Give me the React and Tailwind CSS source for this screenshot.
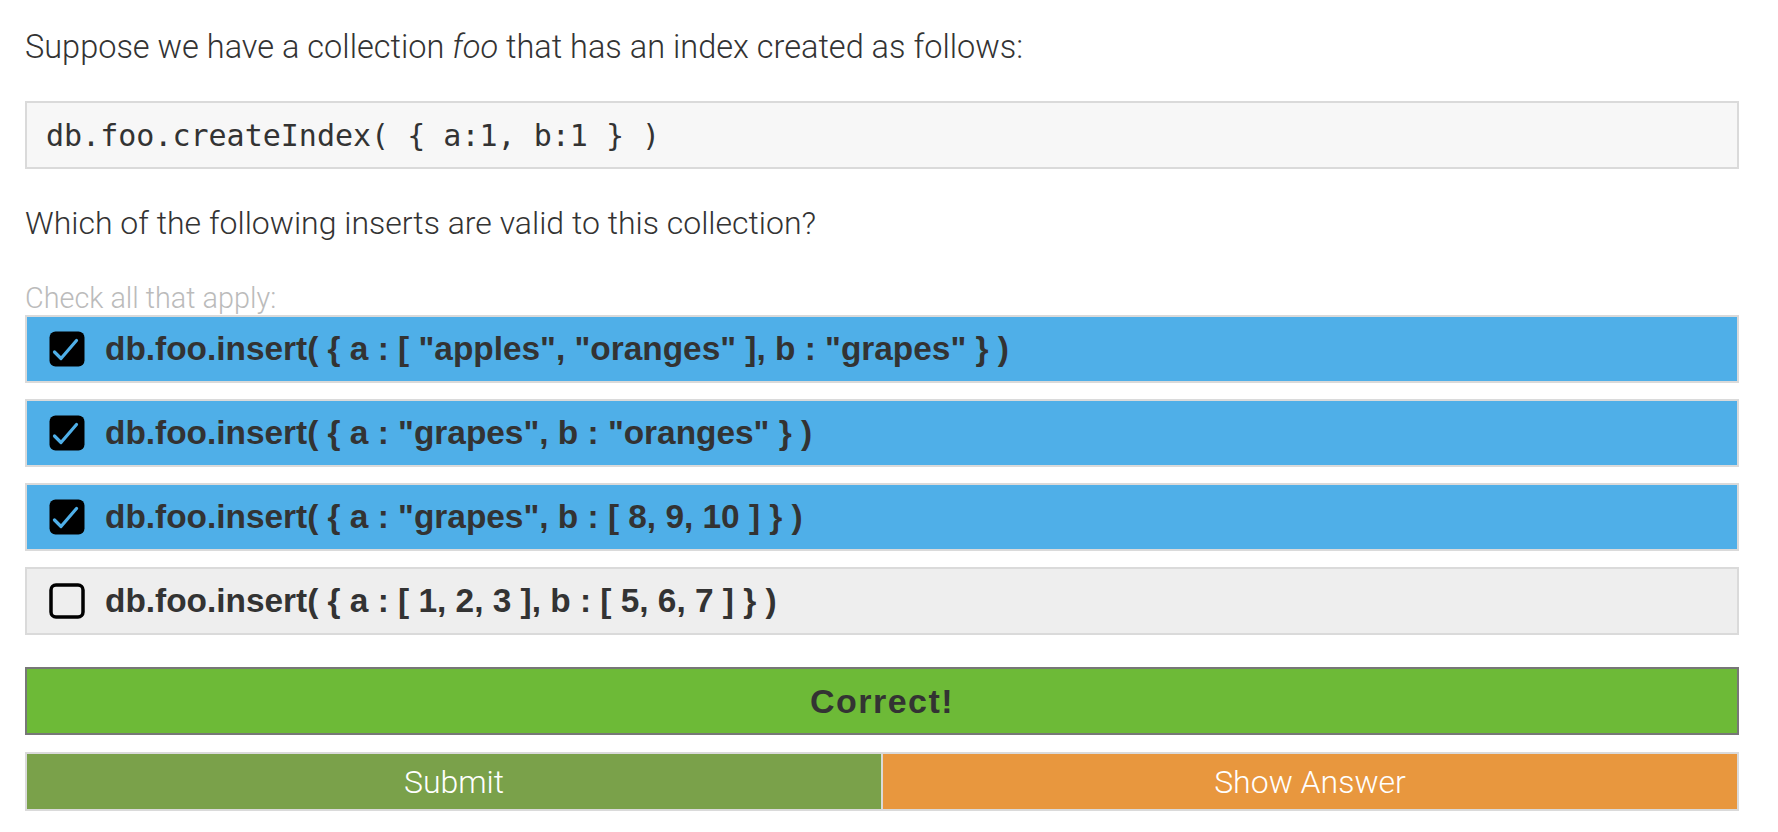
import React from "react";

const rows = [
  { text: 'db.foo.insert( { a : [ "apples", "oranges" ], b : "grapes" } )', checked: true },
  { text: 'db.foo.insert( { a : "grapes", b : "oranges" } )', checked: true },
  { text: 'db.foo.insert( { a : "grapes", b : [ 8, 9, 10 ] } )', checked: true },
  { text: 'db.foo.insert( { a : [ 1, 2, 3 ], b : [ 5, 6, 7 ] } )', checked: false },
];

function CheckBox({ checked }) {
  if (checked) {
    return (
      <svg width="36" height="36" viewBox="0 0 36 36" className="shrink-0">
        <rect x="0.5" y="0.5" width="35" height="35" rx="6" fill="#000" />
        <path d="M5.5 21 L12 27.5 L27.5 9.5" stroke="#4fafe8" strokeWidth="3.2" fill="none" strokeLinecap="round" strokeLinejoin="round" />
      </svg>
    );
  }
  return (
    <svg width="36" height="36" viewBox="0 0 36 36" className="shrink-0">
      <rect x="2" y="2" width="32" height="32" rx="5" fill="none" stroke="#000" strokeWidth="3.5" />
    </svg>
  );
}

export default function App() {
  return (
    <div className="bg-white w-[1778px] h-[832px] overflow-hidden font-['Roboto',sans-serif] font-light text-[#333]">
      <div className="ml-[25px] w-[1714px] pt-[27px]">
        <p className="text-[32.5px] leading-[40px]">
          Suppose we have a collection <em>foo</em> that has an index created as follows:
        </p>
        <div className="mt-[34px] h-[68px] border-2 border-[#dadada] bg-[#f7f7f7] flex items-center px-[19px]">
          <span className="font-['DejaVu_Sans_Mono',monospace] font-normal text-[30px] text-[#333] whitespace-pre">
            db.foo.createIndex( {"{"} a:1, b:1 {"}"} )
          </span>
        </div>
        <p className="mt-[34px] text-[32px] leading-[40px]">
          Which of the following inserts are valid to this collection?
        </p>
        <p className="mt-[39px] text-[28.8px] leading-[32px] text-[#bbbbbb]">Check all that apply:</p>
        <div className="mt-px flex flex-col gap-[16px]">
          {rows.map((r, i) => (
            <div
              key={i}
              className={
                "h-[68px] border-2 border-[#dadada] flex items-center pl-[22px] gap-[20px] " +
                (r.checked ? "bg-[#4fafe8]" : "bg-[#eeeeee]")
              }
            >
              <CheckBox checked={r.checked} />
              <span className="font-['Liberation_Sans',Arial,sans-serif] font-bold text-[33.4px] text-[#333] whitespace-pre">
                {r.text}
              </span>
            </div>
          ))}
        </div>
        <div className="mt-[32px] h-[68px] border-2 border-[#777777] bg-[#6dba37] flex items-center justify-center">
          <span className="font-['Liberation_Sans',Arial,sans-serif] font-bold text-[34px] tracking-[1.5px] text-[#333]">
            Correct!
          </span>
        </div>
        <div className="mt-[17px] h-[59px] flex border-2 border-[#dadada] bg-[#dadada] gap-[2px]">
          <button className="flex-1 bg-[#7aa14a] text-white text-[32px] font-light flex items-center justify-center">
            Submit
          </button>
          <button className="flex-1 bg-[#e8973e] text-white text-[32px] font-light flex items-center justify-center">
            Show Answer
          </button>
        </div>
      </div>
    </div>
  );
}
